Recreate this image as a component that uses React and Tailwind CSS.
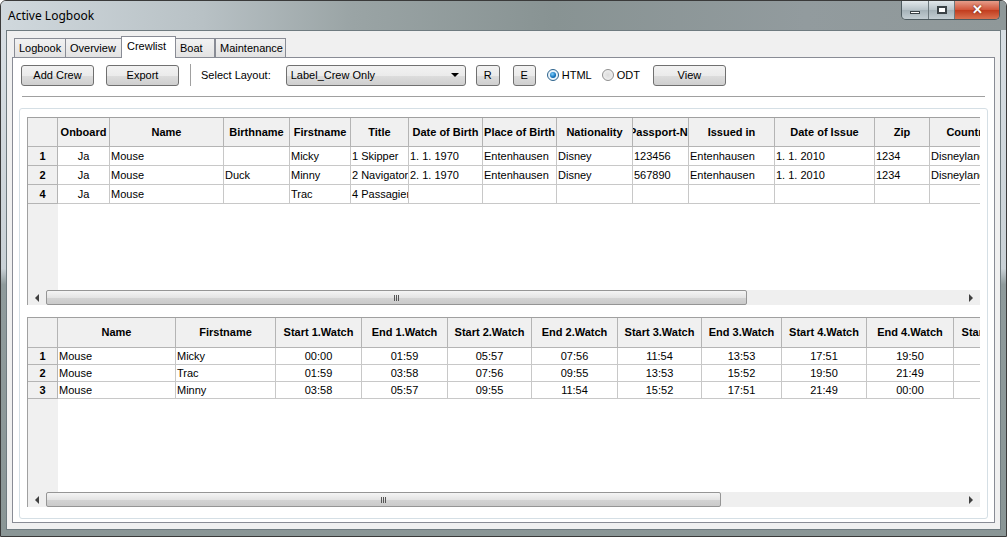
import React from 'react';

const font = "font-['Liberation_Sans',Arial,sans-serif]";

const crewCols = [
  { label: 'Onboard', w: 52 },
  { label: 'Name', w: 114 },
  { label: 'Birthname', w: 66 },
  { label: 'Firstname', w: 61 },
  { label: 'Title', w: 58 },
  { label: 'Date of Birth', w: 74 },
  { label: 'Place of Birth', w: 74 },
  { label: 'Nationality', w: 76 },
  { label: 'Passport-Nr', w: 56 },
  { label: 'Issued in', w: 86 },
  { label: 'Date of Issue', w: 100 },
  { label: 'Zip', w: 55 },
  { label: 'Country', w: 76 },
];

const crewRows = [
  { id: 1, cells: ['Ja', 'Mouse', '', 'Micky', '1 Skipper', '1. 1. 1970', 'Entenhausen', 'Disney', '123456', 'Entenhausen', '1. 1. 2010', '1234', 'Disneyland'] },
  { id: 2, cells: ['Ja', 'Mouse', 'Duck', 'Minny', '2 Navigator', '2. 1. 1970', 'Entenhausen', 'Disney', '567890', 'Entenhausen', '1. 1. 2010', '1234', 'Disneyland'] },
  { id: 4, cells: ['Ja', 'Mouse', '', 'Trac', '4 Passagier', '', '', '', '', '', '', '', ''] },
];

const watchCols = [
  { label: 'Name', w: 118 },
  { label: 'Firstname', w: 100 },
  { label: 'Start 1.Watch', w: 86 },
  { label: 'End 1.Watch', w: 86 },
  { label: 'Start 2.Watch', w: 84 },
  { label: 'End 2.Watch', w: 86 },
  { label: 'Start 3.Watch', w: 84 },
  { label: 'End 3.Watch', w: 80 },
  { label: 'Start 4.Watch', w: 85 },
  { label: 'End 4.Watch', w: 87 },
  { label: 'Start 5.Watch', w: 86 },
];

const watchRows = [
  { id: 1, cells: ['Mouse', 'Micky', '00:00', '01:59', '05:57', '07:56', '11:54', '13:53', '17:51', '19:50', ''] },
  { id: 2, cells: ['Mouse', 'Trac', '01:59', '03:58', '07:56', '09:55', '13:53', '15:52', '19:50', '21:49', ''] },
  { id: 3, cells: ['Mouse', 'Minny', '03:58', '05:57', '09:55', '11:54', '15:52', '17:51', '21:49', '00:00', ''] },
];

const btnLook =
  'h-[21px] flex items-center rounded-[3px] border border-[#707070] bg-[linear-gradient(to_bottom,#f2f2f2_0%,#ebebeb_50%,#dddddd_51%,#cfcfcf_100%)] text-[11px] text-black';

const Button = ({ children, className }) => (
  <div className={`${btnLook} justify-center ${className}`}>{children}</div>
);

const ScrollBar = ({ thumb }) => (
  <div className="h-[15px] flex bg-[#efefef] shrink-0">
    <div className="w-[18px] flex items-center justify-center">
      <div className="w-0 h-0 border-y-[4px] border-y-transparent border-r-[4px] border-r-[#404040]" />
    </div>
    <div
      className="h-[15px] rounded-[2px] border border-[#959595] bg-[linear-gradient(to_bottom,#f4f4f4_0%,#e4e4e4_50%,#d4d4d4_51%,#cacaca_100%)] flex items-center justify-center"
      style={{ width: thumb }}
    >
      <div className="flex gap-[1px]">
        <div className="w-[1px] h-[6px] bg-[#555]" />
        <div className="w-[1px] h-[6px] bg-[#555]" />
        <div className="w-[1px] h-[6px] bg-[#555]" />
      </div>
    </div>
    <div className="flex-1" />
    <div className="w-[18px] flex items-center justify-center">
      <div className="w-0 h-0 border-y-[4px] border-y-transparent border-l-[4px] border-l-[#404040]" />
    </div>
  </div>
);

const Grid = ({ cols, rows, headH, rowH, height, thumb, centerFrom }) => (
  <div className="flex flex-col border-l border-t border-[#a0a0a0] bg-white shrink-0" style={{ height }}>
    <div className="flex flex-1 min-h-0">
      {/* row header column */}
      <div className="w-[30px] shrink-0 bg-[#f0f0f0] flex flex-col">
        <div className="border-r border-b border-[#b4b4b4]" style={{ height: headH }} />
        {rows.map((r) => (
          <div
            key={r.id}
            className="border-r border-b border-[#b4b4b4] flex items-center justify-center font-bold text-[11px]"
            style={{ height: rowH }}
          >
            {r.id}
          </div>
        ))}
      </div>
      <div className="flex-1 overflow-hidden">
        <div className="flex w-max bg-[#f0f0f0]" style={{ height: headH }}>
          {cols.map((c) => (
            <div
              key={c.label}
              className="border-r border-b border-[#b4b4b4] flex items-center overflow-hidden whitespace-nowrap font-bold text-[11px]"
              style={{ width: c.w }}
            >
              <div className="-mx-[40px] flex-1 shrink-0 text-center">{c.label}</div>
            </div>
          ))}
        </div>
        {rows.map((r) => (
          <div key={r.id} className="flex w-max" style={{ height: rowH }}>
            {r.cells.map((v, i) => (
              <div
                key={i}
                className={`border-r border-b border-[#c8c8c8] flex items-center overflow-hidden whitespace-nowrap text-[11px] px-[1px] ${
                  i === 0 && centerFrom === 1 ? 'justify-center' : ''
                } ${centerFrom > 1 && i >= centerFrom ? 'justify-center' : ''}`}
                style={{ width: cols[i].w }}
              >
                <span className="shrink-0">{v}</span>
              </div>
            ))}
          </div>
        ))}
      </div>
    </div>
    <ScrollBar thumb={thumb} />
  </div>
);

const Tab = ({ label, active, className }) => (
  <div
    className={`border border-[#898c95] border-b-0 px-[4px] flex items-center text-[11px] ${
      active ? 'h-[22px] bg-white relative z-10 -mb-[1px] pb-[2px]' : 'h-[19px] bg-[linear-gradient(to_bottom,#f2f2f2,#e3e3e3)]'
    } ${className}`}
  >
    {label}
  </div>
);

export default function App() {
  return (
    <div
      className={`${font} w-[1007px] h-[537px] overflow-hidden text-black bg-[linear-gradient(to_bottom,#d9e0e5_0%,#c9d1d6_50%,#8f9b9c_53%,#8a9696_100%)] border border-[#3a3a3a] rounded-t-[6px] flex flex-col`}
    >
      {/* Title bar */}
      <div className="h-[29px] shrink-0 flex bg-[linear-gradient(to_right,#d0d8dd_0%,#b8c1c5_20%,#9aa4a5_35%,#889393_55%,#929b9e_80%,#8f9899_100%)]">
        <div className="pl-[7px] pt-[6px] text-[12px] font-['Noto_Sans',sans-serif] text-black">Active Logbook</div>
        <div className="flex-1" />
        <div className="flex h-[20px] mr-[6px] -mt-[1px] rounded-b-[5px] overflow-hidden border border-[#4d5a5f] border-t-0">
          <div className="w-[27px] flex items-center justify-center bg-[linear-gradient(to_bottom,#e6ecef,#b9c4ca_50%,#a3b0b6_51%,#c3ced3)] border-r border-[#6c787d]">
            <div className="w-[10px] h-[3px] bg-white border border-[#3a4246] mt-[5px]" />
          </div>
          <div className="w-[26px] flex items-center justify-center bg-[linear-gradient(to_bottom,#e6ecef,#b9c4ca_50%,#a3b0b6_51%,#c3ced3)] border-r border-[#6c787d]">
            <div className="w-[10px] h-[8px] border-2 border-[#3a4246] bg-white" />
          </div>
          <div className="w-[44px] flex items-center justify-center bg-[linear-gradient(to_bottom,#e8a593,#d2583d_50%,#c0391b_51%,#d9714f)]">
            <span className="text-white font-bold text-[13px] leading-none [text-shadow:0_0_2px_#5a1a0a]">✕</span>
          </div>
        </div>
      </div>

      {/* Client area */}
      <div className="flex-1 min-h-0 mx-[5px] mb-[6px] border border-[#6f7b80] bg-[#f0f0f0] px-[5px] pt-[6px] pb-[6px] flex flex-col">
        {/* Tabs */}
        <div className="flex items-end h-[20px] pl-[2px] shrink-0">
          <Tab label="Logbook" className="w-[52px]" />
          <Tab label="Overview" className="w-[57px] -ml-[1px]" />
          <Tab label="Crewlist" active className="w-[55px] -ml-[1px] px-[5px]" />
          <Tab label="Boat" className="w-[40px] -ml-[1px]" />
          <Tab label="Maintenance" className="w-[71px]" />
        </div>

        {/* Tab pane */}
        <div className="flex-1 min-h-0 border border-[#898c95] bg-white flex flex-col px-[8px] pt-[6px] pb-[3px]">
          {/* Toolbar */}
          <div className="flex items-center h-[22px] shrink-0">
            <Button className="w-[73px]">Add Crew</Button>
            <Button className="w-[73px] ml-[12px]">Export</Button>
            <div className="w-[1px] h-[22px] bg-[#a0a0a0] ml-[11px]" />
            <span className="text-[11px] ml-[10px]">Select Layout:</span>
            <div className={`${btnLook} w-[180px] ml-[15px] justify-between pl-[4px] pr-[6px]`}>
              <span>Label_Crew Only</span>
              <div className="w-0 h-0 border-x-[4px] border-x-transparent border-t-[4px] border-t-black" />
            </div>
            <Button className="w-[24px] ml-[10px]">R</Button>
            <Button className="w-[23px] ml-[13px]">E</Button>
            <div className="flex items-center ml-[11px] text-[11px]">
              <div className="w-[12px] h-[12px] rounded-full border border-[#2c628b] bg-[#eaf4fb] flex items-center justify-center">
                <div className="w-[6px] h-[6px] rounded-full bg-[radial-gradient(circle_at_40%_35%,#7fd0ff,#0f6fb8_60%,#0a4c86)]" />
              </div>
              <span className="ml-[3px]">HTML</span>
            </div>
            <div className="flex items-center ml-[10px] text-[11px]">
              <div className="w-[12px] h-[12px] rounded-full border border-[#8f8f8f] bg-[radial-gradient(circle,#dcdcdc,#f6f6f6)]" />
              <span className="ml-[3px]">ODT</span>
            </div>
            <Button className="w-[73px] ml-[13px]">View</Button>
          </div>

          {/* Separator line */}
          <div className="h-[1px] bg-[#a0a0a0] mt-[10px] mx-[1px] shrink-0" />

          {/* Group frame */}
          <div className="flex-1 min-h-0 mt-[11px] border border-[#d5dfe5] rounded-[3px] -mx-[2px] px-[7px] pt-[8px] pb-[10px] flex flex-col">
            <Grid
              cols={crewCols}
              rows={crewRows}
              headH={29}
              rowH={19}
              height={188}
              thumb={701}
              centerFrom={1}
            />
            <div className="h-[12px] shrink-0" />
            <Grid
              cols={watchCols}
              rows={watchRows}
              headH={30}
              rowH={17}
              height={190}
              thumb={675}
              centerFrom={2}
            />
          </div>
        </div>
      </div>
    </div>
  );
}
